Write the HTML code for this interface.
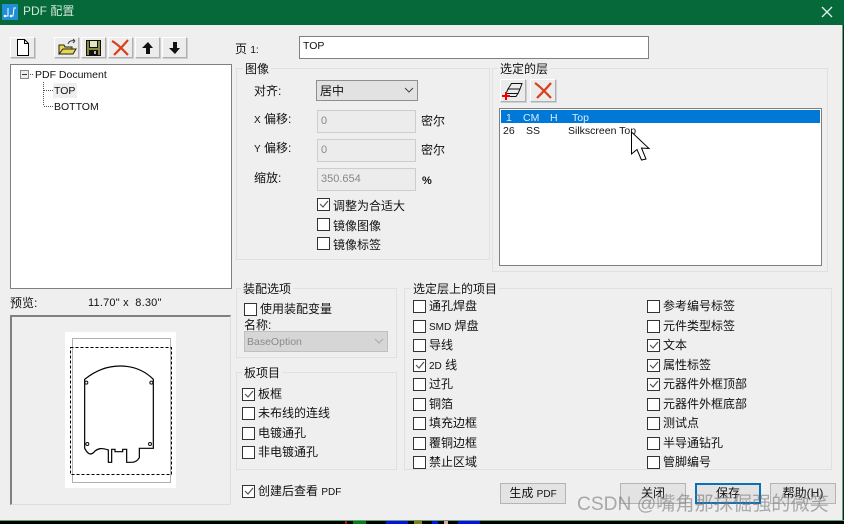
<!DOCTYPE html>
<html><head><meta charset="utf-8">
<style>
html,body{margin:0;padding:0}
body{width:844px;height:524px;overflow:hidden;position:relative;background:#efefef;font-family:"Liberation Sans","Noto Sans CJK SC",sans-serif;font-size:12px;color:#111}
div,span{position:absolute;box-sizing:border-box}
.t{white-space:nowrap;line-height:16px;height:16px}
.l{position:static;font-size:10px}
.g{border:1px solid #e0e0e0}
.gl{background:#efefef;padding:0 2px;white-space:nowrap;line-height:16px;height:16px}
.b{background:#ececec;border:1px solid;border-color:#fff #b0b0b0 #b0b0b0 #fff;box-shadow:1px 1px 0 #cfcfcf}
.c{width:13px;height:13px;border:1px solid #333;background:#fff}
.k svg{position:absolute;left:0;top:0}
.w{background:#fff;border:1px solid #808080}
.i{background:#ececec;border:1px solid #cdcdcd;color:#888;padding-left:3px;line-height:20px;font-size:11px}
.btn{background:#e3e3e3;border:1px solid #b4b4b4;text-align:center;line-height:19px;width:66px;height:21px;top:483px;white-space:nowrap}
.s{font-size:10.500px}
</style></head><body>
<!-- title bar -->
<div style="left:0;top:0;width:844px;height:25px;background:#05693a"></div>
<div style="left:2px;top:4px;width:16px;height:16px;background:#1f8fd8"></div>
<svg style="position:absolute;left:2px;top:4px" width="16" height="16" viewBox="0 0 16 16"><path d="M3 12h3V4M9 12h2l1-8h2" stroke="#fff" stroke-width="1" fill="none"/><circle cx="3" cy="12" r="1.300" fill="#fff"/><circle cx="9" cy="12" r="1.300" fill="#fff"/></svg>
<div class="t" style="left:23px;top:3px;color:#cfe6d8;font-size:12px">PDF 配置</div>
<svg style="position:absolute;left:821px;top:6px" width="12" height="12" viewBox="0 0 12 12"><path d="M1 1L11 11M11 1L1 11" stroke="#e4f0e8" stroke-width="1.300"/></svg>

<!-- toolbar -->
<div class="b" style="left:10px;top:37px;width:25px;height:21px"></div>
<svg style="position:absolute;left:10px;top:37px" width="25" height="21" viewBox="0 0 25 21"><path d="M7.500 2.500h7l4 4v12h-11z" fill="#fff" stroke="#000"/><path d="M14.500 2.500v4h4" fill="none" stroke="#000"/></svg>
<div class="b" style="left:54px;top:37px;width:25px;height:21px"></div>
<svg style="position:absolute;left:54px;top:37px" width="25" height="21" viewBox="0 0 25 21"><path d="M5 17V8h5l1 2h7v2H9l-4 5h14l3-5H9" fill="#e8d850" stroke="#222"/><path d="M14 7c1-3 4-4 7-3m0 0l-2-2m2 2l-2 2" fill="none" stroke="#444"/></svg>
<div class="b" style="left:81px;top:37px;width:25px;height:21px"></div>
<svg style="position:absolute;left:81px;top:37px" width="25" height="21" viewBox="0 0 25 21"><path d="M5.500 3.500h14v15h-14z" fill="#8a8a3a" stroke="#111"/><path d="M8.500 3.500h8v7h-8z" fill="#e4e4c0" stroke="#111"/><path d="M8 13h9v5H8z" fill="#111"/><path d="M13 14h2v3h-2z" fill="#bbb"/></svg>
<div class="b" style="left:108px;top:37px;width:25px;height:21px"></div>
<svg style="position:absolute;left:108px;top:37px" width="25" height="21" viewBox="0 0 25 21"><path d="M4 4C10 7 15 13 20 18M20 3C15 9 10 14 6 18" stroke="#d8401c" stroke-width="2.200" fill="none"/></svg>
<div class="b" style="left:135px;top:37px;width:25px;height:21px"></div>
<svg style="position:absolute;left:135px;top:37px" width="25" height="21" viewBox="0 0 25 21"><path d="M7 11L13 5l5 6h-3v6h-4v-6z" fill="#111"/></svg>
<div class="b" style="left:162px;top:37px;width:25px;height:21px"></div>
<svg style="position:absolute;left:162px;top:37px" width="25" height="21" viewBox="0 0 25 21"><path d="M7 11l6 6 5-6h-3V5h-4v6z" fill="#111"/></svg>

<!-- tree -->
<div class="w" style="left:10px;top:64px;width:222px;height:225px"></div>
<svg style="position:absolute;left:10px;top:64px" width="100" height="50" viewBox="0 0 100 50"><rect x="10.500" y="6.500" width="8" height="8" fill="#eee" stroke="#888"/><path d="M12 10.500h5" stroke="#333"/><path d="M20 10.500h3M33.500 18v24M34 26.500h9M34 42.500h9" stroke="#555" stroke-dasharray="1 1"/></svg>
<div class="t s" style="left:35px;top:67px">PDF Document</div>
<div style="left:53px;top:83px;width:24px;height:15px;background:#efefef"></div>
<div class="t s" style="left:54px;top:83px">TOP</div>
<div class="t s" style="left:54px;top:99px">BOTTOM</div>

<!-- preview -->
<div class="t" style="left:10px;top:295px">预览:</div>
<div class="t" style="left:88px;top:295px;font-size:11px;letter-spacing:.2px">11.70" x&nbsp; 8.30"</div>
<div style="left:10px;top:315px;width:221px;height:190px;border:1px solid #ddd;border-top:2px solid #808080;border-left:2px solid #808080"></div>
<div style="left:65px;top:332px;width:111px;height:156px;background:#fff"></div>
<svg style="position:absolute;left:0;top:0" width="240" height="524" viewBox="0 0 240 524" shape-rendering="crispEdges">
<rect x="72.500" y="338.500" width="98" height="144" fill="none" stroke="#b0b0b0"/>
<rect x="70.500" y="347.500" width="101" height="127" fill="none" stroke="#000" stroke-dasharray="3 2"/>
</svg>
<svg style="position:absolute;left:0;top:285px" width="240" height="239" viewBox="0 0 720 717">
<path d="M254 283C285 258 320 243 360 243C400 243 435 258 460 283V490H418V518C412 528 405 532 395 532H380V493H368V500H345V493H335V532H325V495C305 488 295 490 285 498C272 515 262 505 254 490Z" fill="none" stroke="#000" stroke-width="3.600"/>
<circle cx="259" cy="293" r="4.500" fill="none" stroke="#111" stroke-width="3"/><circle cx="454" cy="293" r="4.500" fill="none" stroke="#111" stroke-width="3"/><circle cx="262" cy="477" r="4.500" fill="none" stroke="#111" stroke-width="3"/><circle cx="450" cy="477" r="4.500" fill="none" stroke="#111" stroke-width="3"/>
</svg>

<!-- page name -->
<div class="t" style="left:235px;top:41px">页 <span class="l">1:</span></div>
<div class="w" style="left:299px;top:36px;width:350px;height:23px;font-size:10.500px;line-height:19px;padding-left:3px">TOP</div>

<!-- image group -->
<div class="g" style="left:236px;top:68px;width:254px;height:192px"></div>
<div class="gl" style="left:243px;top:61px">图像</div>
<div class="t" style="left:254px;top:83px">对齐:</div>
<div style="left:316px;top:80px;width:102px;height:21px;background:#e2e2e2;border:1px solid #8f8f8f;padding-left:3px;line-height:20px">居中</div>
<svg style="position:absolute;left:404px;top:87px" width="10" height="7"><path d="M1 1l4 4 4-4" fill="none" stroke="#444"/></svg>
<div class="t" style="left:254px;top:111px"><span class="l">X</span> 偏移:</div>
<div class="i" style="left:317px;top:110px;width:99px;height:23px">0</div>
<div class="t" style="left:421px;top:113px">密尔</div>
<div class="t" style="left:254px;top:140px"><span class="l">Y</span> 偏移:</div>
<div class="i" style="left:317px;top:139px;width:99px;height:23px">0</div>
<div class="t" style="left:421px;top:142px">密尔</div>
<div class="t" style="left:254px;top:170px">缩放:</div>
<div class="i" style="left:317px;top:168px;width:99px;height:23px">350.654</div>
<div class="t" style="left:422px;top:173px;font-weight:bold;font-size:11px">%</div>

<div class="c k" style="left:317px;top:198px"><svg width="11" height="11"><path d="M2 5l3 3 5-6" fill="none" stroke="#555" stroke-width="1.200"/></svg></div><div class="t" style="left:333px;top:198px">调整为合适大</div>
<div class="c" style="left:317px;top:218px"></div><div class="t" style="left:333px;top:218px">镜像图像</div>
<div class="c" style="left:317px;top:237px"></div><div class="t" style="left:333px;top:237px">镜像标签</div>

<!-- layers group -->
<div class="g" style="left:492px;top:68px;width:336px;height:204px"></div>
<div class="gl" style="left:498px;top:61px">选定的层</div>
<div class="b" style="left:500px;top:79px;width:26px;height:23px"></div>
<svg style="position:absolute;left:500px;top:79px" width="26" height="23" viewBox="0 0 26 23"><path d="M11.500 4.500H22L20 10H8zM8 10L6 14.500H18L20 10M6 14.500L5.500 17.500H16L18 14.500" fill="none" stroke="#111"/><path d="M5 13h2v3h3v2H7v3H5v-3H2v-2h3z" fill="#e00"/></svg>
<div class="b" style="left:530px;top:79px;width:26px;height:23px"></div>
<svg style="position:absolute;left:530px;top:79px" width="26" height="23" viewBox="0 0 26 23"><path d="M5 4C11 8 16 14 21 19M21 4C16 10 11 15 7 19" stroke="#d8401c" stroke-width="2.200" fill="none"/></svg>
<div class="w" style="left:499px;top:108px;width:323px;height:158px"></div>
<div style="left:501px;top:110px;width:319px;height:13px;background:#0078d7"></div>
<div class="t s" style="left:506px;top:110px;color:#dcecfa">1</div>
<div class="t s" style="left:523px;top:110px;color:#dcecfa">CM</div>
<div class="t s" style="left:550px;top:110px;color:#dcecfa">H</div>
<div class="t s" style="left:572px;top:110px;color:#dcecfa">Top</div>
<div class="t s" style="left:503px;top:123px">26</div>
<div class="t s" style="left:526px;top:123px">SS</div>
<div class="t s" style="left:568px;top:123px">Silkscreen Top</div>
<svg style="position:absolute;left:625px;top:125px" width="30" height="40" viewBox="0 0 30 40"><path d="M6.500 7V29L12 24.500 16.500 35 21 34 16.500 23 24 23.500Z" fill="#fff" stroke="#000"/></svg>

<!-- assembly -->
<div class="g" style="left:236px;top:288px;width:161px;height:70px"></div>
<div class="gl" style="left:241px;top:281px">装配选项</div>
<div class="c" style="left:244px;top:303px"></div><div class="t" style="left:260px;top:301px">使用装配变量</div>
<div class="t" style="left:244px;top:317px">名称:</div>
<div class="s" style="left:244px;top:331px;width:144px;height:21px;background:#d6d6d6;border:1px solid #c0c0c0;color:#8a8a8a;line-height:20px;padding-left:2px">BaseOption</div>
<svg style="position:absolute;left:374px;top:338px" width="10" height="7"><path d="M1 1l4 4 4-4" fill="none" stroke="#aaa"/></svg>

<!-- board -->
<div class="g" style="left:236px;top:372px;width:161px;height:98px"></div>
<div class="gl" style="left:242px;top:365px">板项目</div>
<div class="c k" style="left:242px;top:388px"><svg width="11" height="11"><path d="M2 5l3 3 5-6" fill="none" stroke="#555" stroke-width="1.200"/></svg></div><div class="t" style="left:258px;top:386px">板框</div>
<div class="c" style="left:242px;top:407px"></div><div class="t" style="left:258px;top:405px">未布线的连线</div>
<div class="c" style="left:242px;top:427px"></div><div class="t" style="left:258px;top:425px">电镀通孔</div>
<div class="c" style="left:242px;top:446px"></div><div class="t" style="left:258px;top:444px">非电镀通孔</div>

<!-- items -->
<div class="g" style="left:404px;top:288px;width:428px;height:182px"></div>
<div class="gl" style="left:411px;top:281px">选定层上的项目</div>
<div class="c" style="left:413px;top:300px"></div><div class="t" style="left:429px;top:298px">通孔焊盘</div>
<div class="c" style="left:413px;top:320px"></div><div class="t" style="left:429px;top:318px"><span class="l">SMD</span> 焊盘</div>
<div class="c" style="left:413px;top:339px"></div><div class="t" style="left:429px;top:337px">导线</div>
<div class="c k" style="left:413px;top:359px"><svg width="11" height="11"><path d="M2 5l3 3 5-6" fill="none" stroke="#555" stroke-width="1.200"/></svg></div><div class="t" style="left:429px;top:357px"><span class="l">2D</span> 线</div>
<div class="c" style="left:413px;top:378px"></div><div class="t" style="left:429px;top:376px">过孔</div>
<div class="c" style="left:413px;top:398px"></div><div class="t" style="left:429px;top:396px">铜箔</div>
<div class="c" style="left:413px;top:417px"></div><div class="t" style="left:429px;top:415px">填充边框</div>
<div class="c" style="left:413px;top:437px"></div><div class="t" style="left:429px;top:435px">覆铜边框</div>
<div class="c" style="left:413px;top:456px"></div><div class="t" style="left:429px;top:454px">禁止区域</div>

<div class="c" style="left:647px;top:300px"></div><div class="t" style="left:663px;top:298px">参考编号标签</div>
<div class="c" style="left:647px;top:320px"></div><div class="t" style="left:663px;top:318px">元件类型标签</div>
<div class="c k" style="left:647px;top:339px"><svg width="11" height="11"><path d="M2 5l3 3 5-6" fill="none" stroke="#555" stroke-width="1.200"/></svg></div><div class="t" style="left:663px;top:337px">文本</div>
<div class="c k" style="left:647px;top:359px"><svg width="11" height="11"><path d="M2 5l3 3 5-6" fill="none" stroke="#555" stroke-width="1.200"/></svg></div><div class="t" style="left:663px;top:357px">属性标签</div>
<div class="c k" style="left:647px;top:378px"><svg width="11" height="11"><path d="M2 5l3 3 5-6" fill="none" stroke="#555" stroke-width="1.200"/></svg></div><div class="t" style="left:663px;top:376px">元器件外框顶部</div>
<div class="c" style="left:647px;top:398px"></div><div class="t" style="left:663px;top:396px">元器件外框底部</div>
<div class="c" style="left:647px;top:417px"></div><div class="t" style="left:663px;top:415px">测试点</div>
<div class="c" style="left:647px;top:437px"></div><div class="t" style="left:663px;top:435px">半导通钻孔</div>
<div class="c" style="left:647px;top:456px"></div><div class="t" style="left:663px;top:454px">管脚编号</div>

<!-- bottom -->
<div class="c k" style="left:242px;top:485px"><svg width="11" height="11"><path d="M2 5l3 3 5-6" fill="none" stroke="#555" stroke-width="1.200"/></svg></div><div class="t" style="left:258px;top:483px">创建后查看 <span class="l">PDF</span></div>
<div class="btn" style="left:500px">生成 <span class="l">PDF</span></div>
<div class="btn" style="left:620px">关闭</div>
<div class="btn" style="left:695px;border:2px solid #0f6fb5;line-height:17px">保存</div>
<div class="btn" style="left:770px">帮助(H)</div>
<div class="t" style="left:577px;top:494px;height:22px;line-height:22px;font-size:19.200px;color:rgba(120,120,120,.6)">CSDN @嘴角那抹倔强的微笑</div>

<!-- edges and bottom strip -->
<div style="left:842px;top:25px;width:1px;height:495px;background:#5aa77c"></div>
<div style="left:843px;top:25px;width:1px;height:499px;background:#222"></div>
<div style="left:0;top:520px;width:844px;height:4px;background:#000;border-top:1px solid #5aa77c"></div>
<div style="left:345px;top:521px;width:2px;height:3px;background:#c00"></div>
<div style="left:353px;top:521px;width:13px;height:3px;background:#0a7a1a"></div>
<div style="left:386px;top:521px;width:22px;height:3px;background:#0a10e0"></div>
<div style="left:414px;top:521px;width:8px;height:3px;background:#8a7a10"></div>
<div style="left:432px;top:521px;width:6px;height:3px;background:#0a10e0"></div>
<div style="left:444px;top:521px;width:4px;height:3px;background:#e8a0a0"></div>
<div style="left:458px;top:521px;width:22px;height:3px;background:#0a10e0"></div>
</body></html>
